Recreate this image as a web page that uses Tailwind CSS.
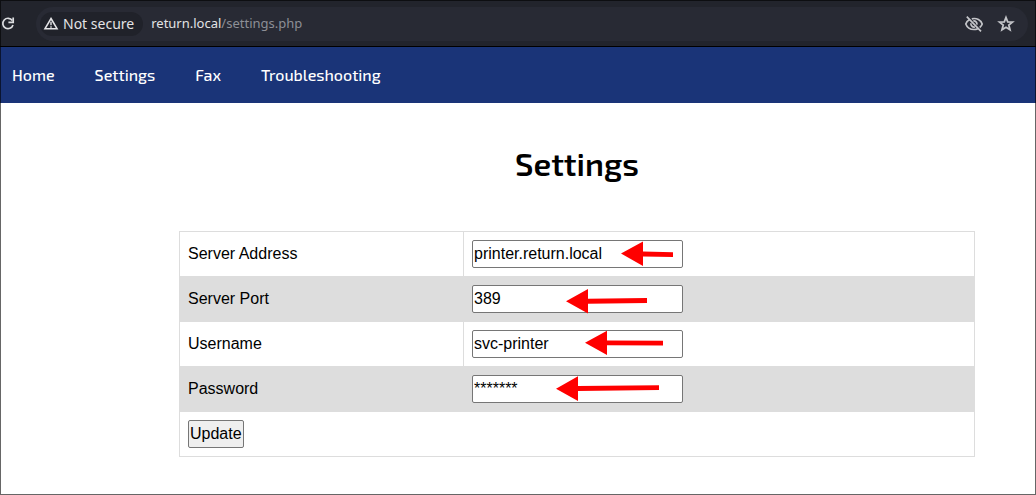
<!DOCTYPE html>
<html lang="en">
<head>
<meta charset="utf-8">
<meta name="viewport" content="width=device-width, initial-scale=1">
<title>Settings</title>
<script src="https://cdn.jsdelivr.net/npm/@tailwindcss/browser@4"></script>
</head>
<body class="min-h-screen bg-white font-['Liberation_Sans',Arial,sans-serif] text-base text-black">
<div class="pointer-events-none fixed inset-0 z-10 border border-black/60"></div>

<div class="flex h-[47px] items-center gap-5 border-b border-black bg-[#22242c] pt-px pr-2 font-['Noto_Sans',sans-serif]">
  <button type="button" aria-label="Reload" class="shrink-0 text-[#dcdde0]">
    <svg class="block h-4 w-4" viewBox="0 0 16 16" fill="none" stroke="currentColor" stroke-width="1.700"><path d="M12.300 4.500A5.200 5.200 0 1 0 13 9"/><path d="M13.200 1.500v4.800H8.400" /></svg>
  </button>
  <div class="flex h-[34px] flex-1 items-center rounded-full bg-[#282a34] pr-3 pl-1">
    <button type="button" class="flex h-6 items-center gap-1 rounded-full bg-[#20222a] pr-[9px] pl-[3px] text-sm text-[#e3e3e5]">
      <svg class="block h-4 w-4" viewBox="0 0 16 16" fill="none" stroke="currentColor"><path d="M8 2.500 14 12.700H2Z" stroke-width="1.600"/><path d="M8 5.700v3.600M8 10.300v1.400" stroke-width="1.400"/></svg>
      Not secure
    </button>
    <div role="textbox" aria-label="Address" class="ml-2 flex-1 text-[13px] text-[#e3e3e5]">return.local<span class="text-[#8d8f96]">/settings.php</span></div>
    <div class="flex items-center gap-3 text-[#c4c5c9]">
      <button type="button" aria-label="Tracking protection">
        <svg class="block h-5 w-5" viewBox="0 0 20 20" fill="none" stroke="currentColor" stroke-width="1.700"><path d="M5.600 5.400C3.600 6.500 2.300 8.200 1.800 10c1.200 3.300 4.500 5.500 8.200 5.500 1.400 0 2.700-.3 3.900-.8M7.800 4.800C12.800 3.600 17 6.200 18.200 10c-.5 1.500-1.400 2.700-2.500 3.500"/><path d="M9.300 7a3.200 3.200 0 0 1 3.600 3.700M7 9.200a3.200 3.200 0 0 0 3.900 3.800M2.800 2.600 17 17.400"/></svg>
      </button>
      <button type="button" aria-label="Bookmark this page">
        <svg class="block h-5 w-5" viewBox="0 0 20 20" fill="none" stroke="currentColor" stroke-width="1.800"><path d="m10 3.500 1.700 4.300 4.800.3-3.700 3 1.200 4.600-4-2.500-4 2.500 1.200-4.600-3.700-3 4.800-.3Z"/></svg>
      </button>
    </div>
  </div>
</div>

<nav class="flex h-14 items-center gap-10 bg-[#1a3478] px-3 font-['Exo_2','Noto_Sans',sans-serif] text-base font-medium text-white">
  <a href="#home">Home</a>
  <a href="#settings">Settings</a>
  <a href="#fax">Fax</a>
  <a href="#troubleshooting">Troubleshooting</a>
</nav>

<main class="mr-[61px] ml-[179px] pt-9">
  <h1 class="text-center font-['Exo_2','Noto_Sans',sans-serif] text-[32px] leading-[48px] font-semibold">Settings</h1>
  <form class="mt-11">
    <table class="w-full border-collapse border border-[#dddddd] leading-6">
      <tbody>
        <tr>
          <td class="w-[284px] border border-[#dddddd] p-2"><label for="address">Server Address</label></td>
          <td class="border border-[#dddddd] p-2">
            <div class="relative w-[211px]">
              <input id="address" type="text" value="printer.return.local" class="block h-7 w-full rounded-xs border border-[#767676] bg-white px-px">
              <svg class="pointer-events-none absolute inset-0" width="211" height="28" viewBox="0 0 211 28" fill="#ff0000"><path d="M149 13.500 171 1.500V11.500L201 12.200V17L171 16.500V26Z"/></svg>
            </div>
          </td>
        </tr>
        <tr class="bg-[#dddddd]">
          <td class="border border-[#dddddd] p-2"><label for="port">Server Port</label></td>
          <td class="border border-[#dddddd] p-2">
            <div class="relative w-[211px]">
              <input id="port" type="text" value="389" class="block h-7 w-full rounded-xs border border-[#767676] bg-white px-px">
              <svg class="pointer-events-none absolute inset-0 overflow-visible" width="211" height="28" viewBox="0 0 211 28" fill="#ff0000"><path d="M94 16.300 116 4V13.700L175 13V18L116 18.700V28.500Z"/></svg>
            </div>
          </td>
        </tr>
        <tr>
          <td class="border border-[#dddddd] p-2"><label for="username">Username</label></td>
          <td class="border border-[#dddddd] p-2">
            <div class="relative w-[211px]">
              <input id="username" type="text" value="svc-printer" class="block h-7 w-full rounded-xs border border-[#767676] bg-white px-px">
              <svg class="pointer-events-none absolute inset-0" width="211" height="28" viewBox="0 0 211 28" fill="#ff0000"><path d="M113 12.700 135 .7V10.500L191 10.700V15.500L135 15.300V25Z"/></svg>
            </div>
          </td>
        </tr>
        <tr class="bg-[#dddddd]">
          <td class="border border-[#dddddd] p-2"><label for="password">Password</label></td>
          <td class="border border-[#dddddd] p-2">
            <div class="relative w-[211px]">
              <input id="password" type="text" value="*******" class="block h-7 w-full rounded-xs border border-[#767676] bg-white px-px">
              <svg class="pointer-events-none absolute inset-0" width="211" height="28" viewBox="0 0 211 28" fill="#ff0000"><path d="M84 13.700 106 1.200V11L187 10.200V15L106 16V26Z"/></svg>
            </div>
          </td>
        </tr>
        <tr>
          <td colspan="2" class="border border-[#dddddd] p-2"><button type="submit" class="block h-7 rounded-xs border border-[#767676] bg-[#efefef] px-px">Update</button></td>
        </tr>
      </tbody>
    </table>
  </form>
</main>
</body>
</html>
